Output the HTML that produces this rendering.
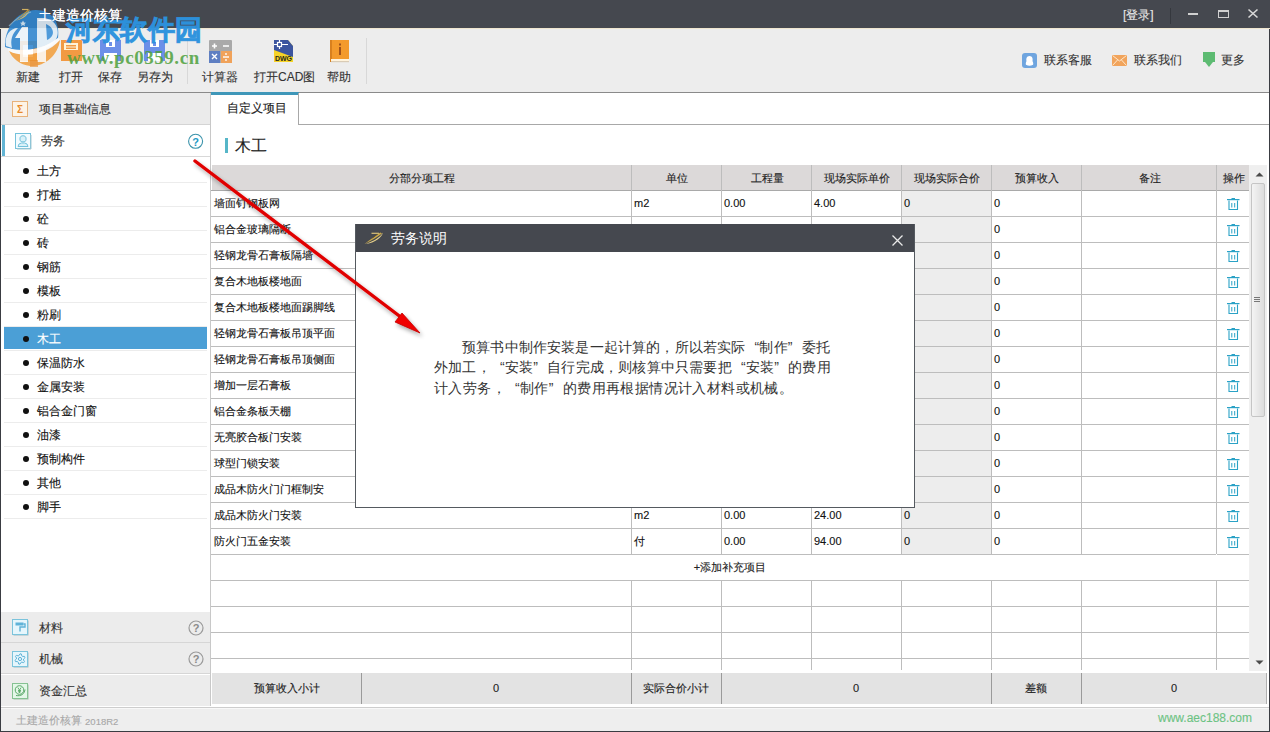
<!DOCTYPE html><html><head><meta charset="utf-8"><style>
*{margin:0;padding:0;box-sizing:border-box}
html,body{width:1270px;height:732px;overflow:hidden;background:#ededed;font-family:"Liberation Sans",sans-serif;font-size:12px;color:#222}
.a{position:absolute}
.t{position:absolute;white-space:nowrap;line-height:1}
.s{-webkit-text-stroke:0.12px currentColor}
svg{position:absolute;overflow:visible}
</style></head><body>
<div class="a" style="left:0px;top:0px;width:1270px;height:28px;background:#45484f;"></div>
<div class="a" style="left:0px;top:28px;width:1270px;height:1px;background:#efe6cf;"></div>
<div class="t" style="left:38px;top:8px;font-size:14px;color:#ffffff;">土建造价核算</div>
<div class="t s" style="left:1123px;top:9px;font-size:12px;color:#e6e6e6;">[登录]</div>
<div class="a" style="left:1170px;top:8px;width:1px;height:16px;background:#35383e;"></div>
<div class="a" style="left:1188px;top:13px;width:10px;height:2px;background:#d0d0d0;"></div>
<div class="a" style="left:1218px;top:10px;width:11px;height:8px;border:1px solid #d0d0d0;border-top:2px solid #d0d0d0"></div>
<svg style="left:1248px;top:9px" width="10" height="9" viewBox="0 0 10 9"><path d="M0.5 0.5 L9.5 8.5 M9.5 0.5 L0.5 8.5" stroke="#d8d8d8" stroke-width="1.6"/></svg>
<div class="a" style="left:0px;top:29px;width:1270px;height:63px;background:#ededed;"></div>
<div class="a" style="left:0px;top:92px;width:1270px;height:1px;background:#8a8a8a;"></div>
<div class="t s" style="left:16px;top:71px;font-size:12px;color:#333;">新建</div>
<div class="t s" style="left:59px;top:71px;font-size:12px;color:#333;">打开</div>
<div class="t s" style="left:98px;top:71px;font-size:12px;color:#333;">保存</div>
<div class="t s" style="left:137px;top:71px;font-size:12px;color:#333;">另存为</div>
<div class="t s" style="left:202px;top:71px;font-size:12px;color:#333;">计算器</div>
<div class="t s" style="left:254px;top:71px;font-size:12px;color:#333;">打开CAD图</div>
<div class="t s" style="left:327px;top:71px;font-size:12px;color:#333;">帮助</div>
<div class="a" style="left:187px;top:38px;width:1px;height:46px;background:#d8d8d8;"></div>
<div class="a" style="left:366px;top:38px;width:1px;height:46px;background:#d8d8d8;"></div>
<svg style="left:18px;top:40px" width="22" height="22"><rect x="2" y="1" width="17" height="20" fill="#f3a14a"/><rect x="5" y="5" width="10" height="12" fill="#fff"/></svg>
<svg style="left:61px;top:40px" width="21" height="21"><rect x="0" y="0" width="21" height="21" fill="#f29a43"/><rect x="3" y="3" width="14" height="7" fill="#fff3d8"/><rect x="5" y="5" width="10" height="1.5" fill="#f29a43"/><rect x="5" y="7.5" width="10" height="1.5" fill="#f29a43"/></svg>
<svg style="left:100px;top:40px" width="21" height="21"><rect x="0" y="0" width="21" height="21" fill="#6c8fe8"/><rect x="6" y="0" width="9" height="7" fill="#fff"/><rect x="9" y="2" width="3" height="4" fill="#6c8fe8"/><rect x="4" y="13" width="13" height="8" fill="#fff"/></svg>
<svg style="left:144px;top:40px" width="21" height="21"><rect x="0" y="0" width="21" height="21" fill="#6c8fe8"/><rect x="6" y="0" width="9" height="7" fill="#fff"/><rect x="9" y="2" width="3" height="4" fill="#6c8fe8"/><rect x="4" y="13" width="13" height="8" fill="#fff"/></svg>
<svg style="left:209px;top:40px" width="23" height="23"><rect x="0" y="0" width="23" height="23" rx="1" fill="#a9a9a9"/><rect x="0" y="11" width="11" height="12" fill="#5f7fc2"/><rect x="12" y="11" width="11" height="12" fill="#f0a25a"/><path d="M3 6 H8 M5.5 3.5 V8.5 M14 6 H20" stroke="#fff" stroke-width="1.6"/><path d="M3 14 L8 19 M8 14 L3 19" stroke="#fff" stroke-width="1.4"/><path d="M14 17 H20" stroke="#fff" stroke-width="1.4"/><circle cx="17" cy="14" r="0.9" fill="#fff"/><circle cx="17" cy="20" r="0.9" fill="#fff"/></svg>
<svg style="left:274px;top:40px" width="20" height="22"><path d="M0 0 H14 L19 6 V22 H0 Z" fill="#f6d327"/><path d="M0 0 H14 L19 6 V17 L0 10 Z" fill="#3c559f"/><path d="M0 4.5 H14 M5.5 0 V9" stroke="#ffffff" stroke-width="1.2"/><rect x="3.5" y="2.5" width="4" height="4" fill="#3c559f" stroke="#fff" stroke-width="1.2"/><text x="9.5" y="20.5" font-size="7" font-weight="bold" text-anchor="middle" fill="#2a2a1a" font-family="Liberation Sans">DWG</text></svg>
<svg style="left:330px;top:40px" width="20" height="23"><rect x="0" y="0" width="19" height="22" fill="#f39a2c"/><rect x="0" y="0" width="2" height="22" fill="#d8801e"/><rect x="1" y="19" width="18" height="2" fill="#fff3dc"/><rect x="1" y="21" width="18" height="1.2" fill="#d9cbb5"/><rect x="9" y="7" width="2" height="8" fill="#a0521a"/><rect x="9" y="3.5" width="2" height="2" fill="#a0521a"/></svg>
<svg style="left:1022px;top:53px" width="15" height="15"><rect x="0" y="0" width="15" height="15" rx="3" fill="#6fa5df"/><path d="M7.5 3 C4.5 3 4 6 4.5 8 C3.5 10 3.5 12 4.5 12 C6 13 9 13 10.5 12 C11.5 12 11.5 10 10.5 8 C11 6 10.5 3 7.5 3 Z" fill="#fff"/></svg>
<div class="t s" style="left:1044px;top:54px;font-size:12px;color:#333;">联系客服</div>
<svg style="left:1112px;top:55px" width="15" height="11"><rect x="0" y="0" width="15" height="11" fill="#f1a45c"/><path d="M0.5 0.5 L7.5 6 L14.5 0.5 M0.5 10.5 L5.5 5 M14.5 10.5 L9.5 5" stroke="#ffe8cc" stroke-width="1" fill="none"/></svg>
<div class="t s" style="left:1134px;top:54px;font-size:12px;color:#333;">联系我们</div>
<svg style="left:1203px;top:52px" width="12" height="16"><rect x="0" y="0" width="12" height="10" fill="#5dbb72"/><path d="M2 10 L10 10 L6 15 Z" fill="#5dbb72"/></svg>
<div class="t s" style="left:1221px;top:54px;font-size:12px;color:#333;">更多</div>
<div class="a" style="left:1px;top:93px;width:209px;height:614px;background:#ffffff;"></div>
<div class="a" style="left:1px;top:93px;width:209px;height:31px;background:#ebebeb;"></div>
<div class="a" style="left:1px;top:124px;width:209px;height:1px;background:#d4d4d4;"></div>
<svg style="left:12px;top:101px" width="17" height="17"><rect x="0.5" y="0.5" width="15" height="15" fill="#fdf3e6" stroke="#e8b27a"/><text x="8" y="12" font-size="10" font-weight="bold" text-anchor="middle" fill="#e88a2a" font-family="Liberation Sans">Σ</text></svg>
<div class="t s" style="left:39px;top:103px;font-size:12px;color:#333;">项目基础信息</div>
<div class="a" style="left:1px;top:125px;width:209px;height:31px;background:#ffffff;"></div>
<div class="a" style="left:2px;top:125px;width:3px;height:31px;background:#62b4d4;"></div>
<div class="a" style="left:1px;top:156px;width:209px;height:1px;background:#d8d8d8;"></div>
<svg style="left:15px;top:133px" width="17" height="17"><rect x="0.5" y="0.5" width="15" height="15" fill="#f2fbff" stroke="#74c2dc"/><path d="M16 2 V16 H2" stroke="#a9c9d2" stroke-width="1" fill="none"/><path d="M5 5 C5 2 11 2 11 5 V7 C11 9.5 5 9.5 5 7 Z" fill="#d9f1f9" stroke="#74c2dc"/><path d="M3 13.5 L4 11 L6.5 10 L9.5 10 L12 11 L13 13.5 Z" fill="#d9f1f9" stroke="#74c2dc"/></svg>
<div class="t s" style="left:41px;top:135px;font-size:12px;color:#333;">劳务</div>
<svg style="left:188px;top:134px" width="16" height="16"><circle cx="7.6" cy="7.3" r="7" fill="#fff" stroke="#3b93ab" stroke-width="1.1"/><text x="7.6" y="11.5" font-size="11" font-weight="bold" text-anchor="middle" fill="#1d9ac6" font-family="Liberation Sans">?</text></svg>
<div class="a" style="left:23px;top:168px;width:6px;height:6px;border-radius:50%;background:#111"></div>
<div class="t s" style="left:37px;top:165px;font-size:12px;color:#111;">土方</div>
<div class="a" style="left:4px;top:182px;width:203px;height:1px;background:#ececec;"></div>
<div class="a" style="left:23px;top:192px;width:6px;height:6px;border-radius:50%;background:#111"></div>
<div class="t s" style="left:37px;top:189px;font-size:12px;color:#111;">打桩</div>
<div class="a" style="left:4px;top:206px;width:203px;height:1px;background:#ececec;"></div>
<div class="a" style="left:23px;top:216px;width:6px;height:6px;border-radius:50%;background:#111"></div>
<div class="t s" style="left:37px;top:213px;font-size:12px;color:#111;">砼</div>
<div class="a" style="left:4px;top:230px;width:203px;height:1px;background:#ececec;"></div>
<div class="a" style="left:23px;top:240px;width:6px;height:6px;border-radius:50%;background:#111"></div>
<div class="t s" style="left:37px;top:237px;font-size:12px;color:#111;">砖</div>
<div class="a" style="left:4px;top:254px;width:203px;height:1px;background:#ececec;"></div>
<div class="a" style="left:23px;top:264px;width:6px;height:6px;border-radius:50%;background:#111"></div>
<div class="t s" style="left:37px;top:261px;font-size:12px;color:#111;">钢筋</div>
<div class="a" style="left:4px;top:278px;width:203px;height:1px;background:#ececec;"></div>
<div class="a" style="left:23px;top:288px;width:6px;height:6px;border-radius:50%;background:#111"></div>
<div class="t s" style="left:37px;top:285px;font-size:12px;color:#111;">模板</div>
<div class="a" style="left:4px;top:302px;width:203px;height:1px;background:#ececec;"></div>
<div class="a" style="left:23px;top:312px;width:6px;height:6px;border-radius:50%;background:#111"></div>
<div class="t s" style="left:37px;top:309px;font-size:12px;color:#111;">粉刷</div>
<div class="a" style="left:4px;top:326px;width:203px;height:1px;background:#ececec;"></div>
<div class="a" style="left:4px;top:327px;width:203px;height:22px;background:#4b9fd6;"></div>
<div class="a" style="left:23px;top:336px;width:6px;height:6px;border-radius:50%;background:#111"></div>
<div class="t s" style="left:37px;top:333px;font-size:12px;color:#ffffff;">木工</div>
<div class="a" style="left:4px;top:350px;width:203px;height:1px;background:#ececec;"></div>
<div class="a" style="left:23px;top:360px;width:6px;height:6px;border-radius:50%;background:#111"></div>
<div class="t s" style="left:37px;top:357px;font-size:12px;color:#111;">保温防水</div>
<div class="a" style="left:4px;top:374px;width:203px;height:1px;background:#ececec;"></div>
<div class="a" style="left:23px;top:384px;width:6px;height:6px;border-radius:50%;background:#111"></div>
<div class="t s" style="left:37px;top:381px;font-size:12px;color:#111;">金属安装</div>
<div class="a" style="left:4px;top:398px;width:203px;height:1px;background:#ececec;"></div>
<div class="a" style="left:23px;top:408px;width:6px;height:6px;border-radius:50%;background:#111"></div>
<div class="t s" style="left:37px;top:405px;font-size:12px;color:#111;">铝合金门窗</div>
<div class="a" style="left:4px;top:422px;width:203px;height:1px;background:#ececec;"></div>
<div class="a" style="left:23px;top:432px;width:6px;height:6px;border-radius:50%;background:#111"></div>
<div class="t s" style="left:37px;top:429px;font-size:12px;color:#111;">油漆</div>
<div class="a" style="left:4px;top:446px;width:203px;height:1px;background:#ececec;"></div>
<div class="a" style="left:23px;top:456px;width:6px;height:6px;border-radius:50%;background:#111"></div>
<div class="t s" style="left:37px;top:453px;font-size:12px;color:#111;">预制构件</div>
<div class="a" style="left:4px;top:470px;width:203px;height:1px;background:#ececec;"></div>
<div class="a" style="left:23px;top:480px;width:6px;height:6px;border-radius:50%;background:#111"></div>
<div class="t s" style="left:37px;top:477px;font-size:12px;color:#111;">其他</div>
<div class="a" style="left:4px;top:494px;width:203px;height:1px;background:#ececec;"></div>
<div class="a" style="left:23px;top:504px;width:6px;height:6px;border-radius:50%;background:#111"></div>
<div class="t s" style="left:37px;top:501px;font-size:12px;color:#111;">脚手</div>
<div class="a" style="left:4px;top:518px;width:203px;height:1px;background:#ececec;"></div>
<div class="a" style="left:1px;top:612px;width:209px;height:31px;background:#ececec;"></div>
<div class="a" style="left:1px;top:642px;width:209px;height:1px;background:#d6d6d6;"></div>
<div class="t s" style="left:39px;top:622px;font-size:12px;color:#333;">材料</div>
<svg style="left:188px;top:620px" width="16" height="16"><circle cx="8" cy="8" r="7" fill="none" stroke="#9a9a9a" stroke-width="1.2"/><text x="8" y="12" font-size="11" font-weight="bold" text-anchor="middle" fill="#8a8a8a" font-family="Liberation Sans">?</text></svg>
<svg style="left:12px;top:619px" width="18" height="18"><rect x="1.5" y="1.5" width="15" height="15" fill="#9fbcc4"/><rect x="0.5" y="0.5" width="15" height="15" fill="#e6f6fc" stroke="#7cc4dc"/><path d="M3.5 3.5 H11.5 V6.5 H3.5 Z" fill="#5fb3d8"/><path d="M11.5 5 H13 V8 H8 V12.5" stroke="#5fb3d8" stroke-width="1.4" fill="none"/></svg>
<div class="a" style="left:1px;top:643px;width:209px;height:31px;background:#ececec;"></div>
<div class="a" style="left:1px;top:673px;width:209px;height:1px;background:#d6d6d6;"></div>
<div class="t s" style="left:39px;top:653px;font-size:12px;color:#333;">机械</div>
<svg style="left:188px;top:651px" width="16" height="16"><circle cx="8" cy="8" r="7" fill="none" stroke="#9a9a9a" stroke-width="1.2"/><text x="8" y="12" font-size="11" font-weight="bold" text-anchor="middle" fill="#8a8a8a" font-family="Liberation Sans">?</text></svg>
<svg style="left:12px;top:651px" width="18" height="18"><rect x="1.5" y="1.5" width="15" height="15" fill="#9fbcc4"/><rect x="0.5" y="0.5" width="15" height="15" fill="#e6f6fc" stroke="#7cc4dc"/><path d="M8.00 2.80 L9.35 2.98 L9.80 4.88 L10.55 5.45 L12.50 5.40 L13.02 6.65 L11.60 8.00 L11.48 8.93 L12.50 10.60 L11.68 11.68 L9.80 11.12 L8.93 11.48 L8.00 13.20 L6.65 13.02 L6.20 11.12 L5.45 10.55 L3.50 10.60 L2.98 9.35 L4.40 8.00 L4.52 7.07 L3.50 5.40 L4.32 4.32 L6.20 4.88 L7.07 4.52 Z" fill="none" stroke="#5fb3d8" stroke-width="1" stroke-linejoin="round"/><circle cx="8" cy="8" r="1.6" fill="none" stroke="#5fb3d8" stroke-width="1"/></svg>
<div class="a" style="left:1px;top:675px;width:209px;height:32px;background:#ececec;"></div>
<div class="t s" style="left:39px;top:685px;font-size:12px;color:#333;">资金汇总</div>
<svg style="left:12px;top:683px" width="18" height="18"><rect x="1.5" y="1.5" width="15" height="15" fill="#9fbfa6"/><rect x="0.5" y="0.5" width="15" height="15" fill="#e4f7e8" stroke="#86c292"/><circle cx="7.5" cy="7" r="4.3" fill="none" stroke="#5aa868" stroke-width="1"/><path d="M4 12.5 C9 13.5 12.5 11 13 6.5" fill="none" stroke="#5aa868" stroke-width="1"/><path d="M5.8 4.5 L7.5 7 L9.2 4.5 M7.5 7 V10 M6 7.5 H9 M6 8.8 H9" stroke="#5aa868" stroke-width="0.9" fill="none"/></svg>
<div class="a" style="left:210px;top:93px;width:1px;height:614px;background:#c8c8c8;"></div>
<div class="a" style="left:211px;top:93px;width:1058px;height:614px;background:#ffffff;"></div>
<div class="a" style="left:211px;top:92px;width:88px;height:3px;background:#3f97b9;"></div>
<div class="a" style="left:299px;top:95px;width:970px;height:0px;background:#fff;"></div>
<div class="a" style="left:298px;top:93px;width:1px;height:32px;background:#a8a8a8;"></div>
<div class="a" style="left:299px;top:124px;width:970px;height:1px;background:#a8a8a8;"></div>
<div class="t s" style="left:227px;top:102px;font-size:12px;color:#222;">自定义项目</div>
<div class="a" style="left:225px;top:138px;width:3px;height:15px;background:#56b6c8;"></div>
<div class="t" style="left:235px;top:138px;font-size:16px;color:#222;-webkit-text-stroke:0.15px #222">木工</div>
<div class="a" style="left:212px;top:165px;width:1037px;height:25px;background:#dcd9d9;"></div>
<div class="t s" style="left:222.0px;width:400px;text-align:center;top:173px;font-size:11px;color:#222;">分部分项工程</div>
<div class="t s" style="left:477.0px;width:400px;text-align:center;top:173px;font-size:11px;color:#222;">单位</div>
<div class="t s" style="left:567.0px;width:400px;text-align:center;top:173px;font-size:11px;color:#222;">工程量</div>
<div class="t s" style="left:657.0px;width:400px;text-align:center;top:173px;font-size:11px;color:#222;">现场实际单价</div>
<div class="t s" style="left:747.0px;width:400px;text-align:center;top:173px;font-size:11px;color:#222;">现场实际合价</div>
<div class="t s" style="left:837.0px;width:400px;text-align:center;top:173px;font-size:11px;color:#222;">预算收入</div>
<div class="t s" style="left:949.5px;width:400px;text-align:center;top:173px;font-size:11px;color:#222;">备注</div>
<div class="t s" style="left:1033.5px;width:400px;text-align:center;top:173px;font-size:11px;color:#222;">操作</div>
<div class="a" style="left:902px;top:191px;width:89px;height:364px;background:#ededed;"></div>
<div class="t s" style="left:214px;top:198px;font-size:11px;color:#111;">墙面钉钢板网</div>
<div class="t s" style="left:634px;top:198px;font-size:11px;color:#111;">m2</div>
<div class="t s" style="left:724px;top:198px;font-size:11px;color:#111;">0.00</div>
<div class="t s" style="left:814px;top:198px;font-size:11px;color:#111;">4.00</div>
<div class="t s" style="left:904px;top:198px;font-size:11px;color:#111;">0</div>
<div class="t s" style="left:994px;top:198px;font-size:11px;color:#111;">0</div>
<svg style="left:1227px;top:198px" width="13" height="13"><rect x="0" y="1" width="12.5" height="1.2" fill="#2aa2c6"/><rect x="4.5" y="0" width="3.5" height="1.2" fill="#2aa2c6"/><path d="M2 2.5 V11.5 H10.5 V2.5" stroke="#2aa2c6" stroke-width="1.1" fill="none"/><path d="M4.8 5 V9.5 M7.7 5 V9.5" stroke="#2aa2c6" stroke-width="1"/></svg>
<div class="t s" style="left:214px;top:224px;font-size:11px;color:#111;">铝合金玻璃隔断</div>
<div class="t s" style="left:994px;top:224px;font-size:11px;color:#111;">0</div>
<svg style="left:1227px;top:224px" width="13" height="13"><rect x="0" y="1" width="12.5" height="1.2" fill="#2aa2c6"/><rect x="4.5" y="0" width="3.5" height="1.2" fill="#2aa2c6"/><path d="M2 2.5 V11.5 H10.5 V2.5" stroke="#2aa2c6" stroke-width="1.1" fill="none"/><path d="M4.8 5 V9.5 M7.7 5 V9.5" stroke="#2aa2c6" stroke-width="1"/></svg>
<div class="t s" style="left:214px;top:250px;font-size:11px;color:#111;">轻钢龙骨石膏板隔墙</div>
<div class="t s" style="left:994px;top:250px;font-size:11px;color:#111;">0</div>
<svg style="left:1227px;top:250px" width="13" height="13"><rect x="0" y="1" width="12.5" height="1.2" fill="#2aa2c6"/><rect x="4.5" y="0" width="3.5" height="1.2" fill="#2aa2c6"/><path d="M2 2.5 V11.5 H10.5 V2.5" stroke="#2aa2c6" stroke-width="1.1" fill="none"/><path d="M4.8 5 V9.5 M7.7 5 V9.5" stroke="#2aa2c6" stroke-width="1"/></svg>
<div class="t s" style="left:214px;top:276px;font-size:11px;color:#111;">复合木地板楼地面</div>
<div class="t s" style="left:994px;top:276px;font-size:11px;color:#111;">0</div>
<svg style="left:1227px;top:276px" width="13" height="13"><rect x="0" y="1" width="12.5" height="1.2" fill="#2aa2c6"/><rect x="4.5" y="0" width="3.5" height="1.2" fill="#2aa2c6"/><path d="M2 2.5 V11.5 H10.5 V2.5" stroke="#2aa2c6" stroke-width="1.1" fill="none"/><path d="M4.8 5 V9.5 M7.7 5 V9.5" stroke="#2aa2c6" stroke-width="1"/></svg>
<div class="t s" style="left:214px;top:302px;font-size:11px;color:#111;">复合木地板楼地面踢脚线</div>
<div class="t s" style="left:994px;top:302px;font-size:11px;color:#111;">0</div>
<svg style="left:1227px;top:302px" width="13" height="13"><rect x="0" y="1" width="12.5" height="1.2" fill="#2aa2c6"/><rect x="4.5" y="0" width="3.5" height="1.2" fill="#2aa2c6"/><path d="M2 2.5 V11.5 H10.5 V2.5" stroke="#2aa2c6" stroke-width="1.1" fill="none"/><path d="M4.8 5 V9.5 M7.7 5 V9.5" stroke="#2aa2c6" stroke-width="1"/></svg>
<div class="t s" style="left:214px;top:328px;font-size:11px;color:#111;">轻钢龙骨石膏板吊顶平面</div>
<div class="t s" style="left:994px;top:328px;font-size:11px;color:#111;">0</div>
<svg style="left:1227px;top:328px" width="13" height="13"><rect x="0" y="1" width="12.5" height="1.2" fill="#2aa2c6"/><rect x="4.5" y="0" width="3.5" height="1.2" fill="#2aa2c6"/><path d="M2 2.5 V11.5 H10.5 V2.5" stroke="#2aa2c6" stroke-width="1.1" fill="none"/><path d="M4.8 5 V9.5 M7.7 5 V9.5" stroke="#2aa2c6" stroke-width="1"/></svg>
<div class="t s" style="left:214px;top:354px;font-size:11px;color:#111;">轻钢龙骨石膏板吊顶侧面</div>
<div class="t s" style="left:994px;top:354px;font-size:11px;color:#111;">0</div>
<svg style="left:1227px;top:354px" width="13" height="13"><rect x="0" y="1" width="12.5" height="1.2" fill="#2aa2c6"/><rect x="4.5" y="0" width="3.5" height="1.2" fill="#2aa2c6"/><path d="M2 2.5 V11.5 H10.5 V2.5" stroke="#2aa2c6" stroke-width="1.1" fill="none"/><path d="M4.8 5 V9.5 M7.7 5 V9.5" stroke="#2aa2c6" stroke-width="1"/></svg>
<div class="t s" style="left:214px;top:380px;font-size:11px;color:#111;">增加一层石膏板</div>
<div class="t s" style="left:994px;top:380px;font-size:11px;color:#111;">0</div>
<svg style="left:1227px;top:380px" width="13" height="13"><rect x="0" y="1" width="12.5" height="1.2" fill="#2aa2c6"/><rect x="4.5" y="0" width="3.5" height="1.2" fill="#2aa2c6"/><path d="M2 2.5 V11.5 H10.5 V2.5" stroke="#2aa2c6" stroke-width="1.1" fill="none"/><path d="M4.8 5 V9.5 M7.7 5 V9.5" stroke="#2aa2c6" stroke-width="1"/></svg>
<div class="t s" style="left:214px;top:406px;font-size:11px;color:#111;">铝合金条板天棚</div>
<div class="t s" style="left:994px;top:406px;font-size:11px;color:#111;">0</div>
<svg style="left:1227px;top:406px" width="13" height="13"><rect x="0" y="1" width="12.5" height="1.2" fill="#2aa2c6"/><rect x="4.5" y="0" width="3.5" height="1.2" fill="#2aa2c6"/><path d="M2 2.5 V11.5 H10.5 V2.5" stroke="#2aa2c6" stroke-width="1.1" fill="none"/><path d="M4.8 5 V9.5 M7.7 5 V9.5" stroke="#2aa2c6" stroke-width="1"/></svg>
<div class="t s" style="left:214px;top:432px;font-size:11px;color:#111;">无亮胶合板门安装</div>
<div class="t s" style="left:994px;top:432px;font-size:11px;color:#111;">0</div>
<svg style="left:1227px;top:432px" width="13" height="13"><rect x="0" y="1" width="12.5" height="1.2" fill="#2aa2c6"/><rect x="4.5" y="0" width="3.5" height="1.2" fill="#2aa2c6"/><path d="M2 2.5 V11.5 H10.5 V2.5" stroke="#2aa2c6" stroke-width="1.1" fill="none"/><path d="M4.8 5 V9.5 M7.7 5 V9.5" stroke="#2aa2c6" stroke-width="1"/></svg>
<div class="t s" style="left:214px;top:458px;font-size:11px;color:#111;">球型门锁安装</div>
<div class="t s" style="left:994px;top:458px;font-size:11px;color:#111;">0</div>
<svg style="left:1227px;top:458px" width="13" height="13"><rect x="0" y="1" width="12.5" height="1.2" fill="#2aa2c6"/><rect x="4.5" y="0" width="3.5" height="1.2" fill="#2aa2c6"/><path d="M2 2.5 V11.5 H10.5 V2.5" stroke="#2aa2c6" stroke-width="1.1" fill="none"/><path d="M4.8 5 V9.5 M7.7 5 V9.5" stroke="#2aa2c6" stroke-width="1"/></svg>
<div class="t s" style="left:214px;top:484px;font-size:11px;color:#111;">成品木防火门门框制安</div>
<div class="t s" style="left:994px;top:484px;font-size:11px;color:#111;">0</div>
<svg style="left:1227px;top:484px" width="13" height="13"><rect x="0" y="1" width="12.5" height="1.2" fill="#2aa2c6"/><rect x="4.5" y="0" width="3.5" height="1.2" fill="#2aa2c6"/><path d="M2 2.5 V11.5 H10.5 V2.5" stroke="#2aa2c6" stroke-width="1.1" fill="none"/><path d="M4.8 5 V9.5 M7.7 5 V9.5" stroke="#2aa2c6" stroke-width="1"/></svg>
<div class="t s" style="left:214px;top:510px;font-size:11px;color:#111;">成品木防火门安装</div>
<div class="t s" style="left:634px;top:510px;font-size:11px;color:#111;">m2</div>
<div class="t s" style="left:724px;top:510px;font-size:11px;color:#111;">0.00</div>
<div class="t s" style="left:814px;top:510px;font-size:11px;color:#111;">24.00</div>
<div class="t s" style="left:904px;top:510px;font-size:11px;color:#111;">0</div>
<div class="t s" style="left:994px;top:510px;font-size:11px;color:#111;">0</div>
<svg style="left:1227px;top:510px" width="13" height="13"><rect x="0" y="1" width="12.5" height="1.2" fill="#2aa2c6"/><rect x="4.5" y="0" width="3.5" height="1.2" fill="#2aa2c6"/><path d="M2 2.5 V11.5 H10.5 V2.5" stroke="#2aa2c6" stroke-width="1.1" fill="none"/><path d="M4.8 5 V9.5 M7.7 5 V9.5" stroke="#2aa2c6" stroke-width="1"/></svg>
<div class="t s" style="left:214px;top:536px;font-size:11px;color:#111;">防火门五金安装</div>
<div class="t s" style="left:634px;top:536px;font-size:11px;color:#111;">付</div>
<div class="t s" style="left:724px;top:536px;font-size:11px;color:#111;">0.00</div>
<div class="t s" style="left:814px;top:536px;font-size:11px;color:#111;">94.00</div>
<div class="t s" style="left:904px;top:536px;font-size:11px;color:#111;">0</div>
<div class="t s" style="left:994px;top:536px;font-size:11px;color:#111;">0</div>
<svg style="left:1227px;top:536px" width="13" height="13"><rect x="0" y="1" width="12.5" height="1.2" fill="#2aa2c6"/><rect x="4.5" y="0" width="3.5" height="1.2" fill="#2aa2c6"/><path d="M2 2.5 V11.5 H10.5 V2.5" stroke="#2aa2c6" stroke-width="1.1" fill="none"/><path d="M4.8 5 V9.5 M7.7 5 V9.5" stroke="#2aa2c6" stroke-width="1"/></svg>
<div class="t s" style="left:530px;width:400px;text-align:center;top:562px;font-size:11px;color:#222;">+添加补充项目</div>
<div class="a" style="left:211px;top:190px;width:1038px;height:1px;background:#a9a9a9;"></div>
<div class="a" style="left:211px;top:216px;width:1038px;height:1px;background:#bdbdbd;"></div>
<div class="a" style="left:211px;top:242px;width:1038px;height:1px;background:#bdbdbd;"></div>
<div class="a" style="left:211px;top:268px;width:1038px;height:1px;background:#bdbdbd;"></div>
<div class="a" style="left:211px;top:294px;width:1038px;height:1px;background:#bdbdbd;"></div>
<div class="a" style="left:211px;top:320px;width:1038px;height:1px;background:#bdbdbd;"></div>
<div class="a" style="left:211px;top:346px;width:1038px;height:1px;background:#bdbdbd;"></div>
<div class="a" style="left:211px;top:372px;width:1038px;height:1px;background:#bdbdbd;"></div>
<div class="a" style="left:211px;top:398px;width:1038px;height:1px;background:#bdbdbd;"></div>
<div class="a" style="left:211px;top:424px;width:1038px;height:1px;background:#bdbdbd;"></div>
<div class="a" style="left:211px;top:450px;width:1038px;height:1px;background:#bdbdbd;"></div>
<div class="a" style="left:211px;top:476px;width:1038px;height:1px;background:#bdbdbd;"></div>
<div class="a" style="left:211px;top:502px;width:1038px;height:1px;background:#bdbdbd;"></div>
<div class="a" style="left:211px;top:528px;width:1038px;height:1px;background:#bdbdbd;"></div>
<div class="a" style="left:211px;top:554px;width:1038px;height:1px;background:#bdbdbd;"></div>
<div class="a" style="left:211px;top:580px;width:1038px;height:1px;background:#bdbdbd;"></div>
<div class="a" style="left:211px;top:606px;width:1038px;height:1px;background:#bdbdbd;"></div>
<div class="a" style="left:211px;top:632px;width:1038px;height:1px;background:#bdbdbd;"></div>
<div class="a" style="left:211px;top:658px;width:1038px;height:1px;background:#bdbdbd;"></div>
<div class="a" style="left:631px;top:165px;width:1px;height:390px;background:#bdbdbd;"></div>
<div class="a" style="left:631px;top:580px;width:1px;height:90px;background:#bdbdbd;"></div>
<div class="a" style="left:721px;top:165px;width:1px;height:390px;background:#bdbdbd;"></div>
<div class="a" style="left:721px;top:580px;width:1px;height:90px;background:#bdbdbd;"></div>
<div class="a" style="left:811px;top:165px;width:1px;height:390px;background:#bdbdbd;"></div>
<div class="a" style="left:811px;top:580px;width:1px;height:90px;background:#bdbdbd;"></div>
<div class="a" style="left:901px;top:165px;width:1px;height:390px;background:#bdbdbd;"></div>
<div class="a" style="left:901px;top:580px;width:1px;height:90px;background:#bdbdbd;"></div>
<div class="a" style="left:991px;top:165px;width:1px;height:390px;background:#bdbdbd;"></div>
<div class="a" style="left:991px;top:580px;width:1px;height:90px;background:#bdbdbd;"></div>
<div class="a" style="left:1081px;top:165px;width:1px;height:390px;background:#bdbdbd;"></div>
<div class="a" style="left:1081px;top:580px;width:1px;height:90px;background:#bdbdbd;"></div>
<div class="a" style="left:1216px;top:165px;width:1px;height:390px;background:#bdbdbd;"></div>
<div class="a" style="left:1216px;top:580px;width:1px;height:90px;background:#bdbdbd;"></div>
<div class="a" style="left:1249px;top:165px;width:1px;height:390px;background:#bdbdbd;"></div>
<div class="a" style="left:1249px;top:580px;width:1px;height:90px;background:#bdbdbd;"></div>
<div class="a" style="left:1216px;top:554px;width:1px;height:26px;background:#fff;"></div>
<div class="a" style="left:1249px;top:165px;width:18px;height:506px;background:#f0f0f0;"></div>
<div class="a" style="left:1250px;top:166px;width:17px;height:504px;background:#efefef;"></div>
<div class="a" style="left:1251px;top:183px;width:14px;height:234px;background:linear-gradient(90deg,#f4f4f4,#dcdcdc);border:1px solid #c5c5c5;border-radius:2px"></div>
<svg style="left:1255px;top:172px" width="9" height="5"><path d="M0.5 4.5 L4.5 0.5 L8.5 4.5 Z" fill="#4a4a4a"/></svg>
<svg style="left:1255px;top:660px" width="9" height="5"><path d="M0.5 0.5 L4.5 4.5 L8.5 0.5 Z" fill="#4a4a4a"/></svg>
<div class="a" style="left:1254px;top:297px;width:6px;height:1px;background:#777;"></div>
<div class="a" style="left:1254px;top:299px;width:6px;height:1px;background:#777;"></div>
<div class="a" style="left:1254px;top:301px;width:6px;height:1px;background:#777;"></div>
<div class="a" style="left:211px;top:671px;width:1058px;height:36px;background:#ffffff;"></div>
<div class="a" style="left:212px;top:673px;width:1055px;height:31px;background:#e3e3e3;"></div>
<div class="a" style="left:361px;top:673px;width:1px;height:31px;background:#9a9a9a;"></div>
<div class="a" style="left:631px;top:673px;width:1px;height:31px;background:#9a9a9a;"></div>
<div class="a" style="left:721px;top:673px;width:1px;height:31px;background:#9a9a9a;"></div>
<div class="a" style="left:991px;top:673px;width:1px;height:31px;background:#9a9a9a;"></div>
<div class="a" style="left:1081px;top:673px;width:1px;height:31px;background:#9a9a9a;"></div>
<div class="t s" style="left:86.5px;width:400px;text-align:center;top:683px;font-size:11px;color:#222;">预算收入小计</div>
<div class="t s" style="left:296.0px;width:400px;text-align:center;top:683px;font-size:11px;color:#222;">0</div>
<div class="t s" style="left:476.0px;width:400px;text-align:center;top:683px;font-size:11px;color:#222;">实际合价小计</div>
<div class="t s" style="left:656.0px;width:400px;text-align:center;top:683px;font-size:11px;color:#222;">0</div>
<div class="t s" style="left:836.0px;width:400px;text-align:center;top:683px;font-size:11px;color:#222;">差额</div>
<div class="t s" style="left:974.0px;width:400px;text-align:center;top:683px;font-size:11px;color:#222;">0</div>
<div class="a" style="left:1266px;top:673px;width:1px;height:31px;background:#b0b0b0;"></div>
<div class="a" style="left:1px;top:706px;width:1268px;height:1px;background:#ffffff;"></div>
<div class="a" style="left:1px;top:707px;width:1268px;height:1px;background:#cdcdcd;"></div>
<div class="a" style="left:1px;top:708px;width:1268px;height:1px;background:#f8f8f8;"></div>
<div class="a" style="left:1px;top:709px;width:1268px;height:22px;background:#eeeeee;"></div>
<div class="t s" style="left:16px;top:715px;font-size:11px;color:#a8a8a8;">土建造价核算 <span style="font-size:9.5px;position:relative;top:1px">2018R2</span></div>
<div class="t s" style="left:1158px;top:712px;font-size:12px;color:#6cc383;">www.aec188.com</div>
<div class="a" style="left:0px;top:29px;width:1px;height:703px;background:#3a3c42;"></div>
<div class="a" style="left:1269px;top:29px;width:1px;height:703px;background:#3a3c42;"></div>
<div class="a" style="left:0px;top:731px;width:1270px;height:1px;background:#3a3c42;"></div>
<div class="a" style="left:355px;top:224px;width:560px;height:284px;background:#555a60;"></div>
<div class="a" style="left:356px;top:224px;width:558px;height:28px;background:#45484f;"></div>
<div class="a" style="left:356px;top:252px;width:558px;height:255px;background:#ffffff;"></div>
<svg style="left:358px;top:226px" width="30" height="24"><path d="M6.5 18 C12 17 22 12 25 6.5 C24 11 18 17 6.5 18 Z" fill="#e6d08a"/><path d="M6.5 18 C12 14 18 9 22.5 6.5 L24 7.5 C19 11 13 15 6.5 18 Z" fill="#c9a84a"/><path d="M14.5 12 L21 7" stroke="#5a4a2a" stroke-width="0.8"/><path d="M13.5 7.3 H21" stroke="#d8c07a" stroke-width="1.2"/></svg>
<div class="t" style="left:391px;top:231px;font-size:14px;color:#ffffff;">劳务说明</div>
<svg style="left:892px;top:235px" width="11" height="11"><path d="M0.5 0.5 L10.5 10.5 M10.5 0.5 L0.5 10.5" stroke="#eaeaea" stroke-width="1.3"/></svg>
<div class="t" id="dl1" style="left:462px;top:340px;font-size:14px;color:#333;letter-spacing:0.17px">预算书中制作安装是一起计算的，所以若实际<span style="display:inline-block;width:14px;text-align:right">“</span>制作<span style="display:inline-block;width:14px;text-align:left">”</span>委托</div>
<div class="t" id="dl2" style="left:434px;top:360px;font-size:14px;color:#333;letter-spacing:0.2px">外加工，<span style="display:inline-block;width:14px;text-align:right">“</span>安装<span style="display:inline-block;width:14px;text-align:left">”</span>自行完成，则核算中只需要把<span style="display:inline-block;width:14px;text-align:right">“</span>安装<span style="display:inline-block;width:14px;text-align:left">”</span>的费用</div>
<div class="t" id="dl3" style="left:434px;top:381px;font-size:14px;color:#333;letter-spacing:0.4px">计入劳务，<span style="display:inline-block;width:14px;text-align:right">“</span>制作<span style="display:inline-block;width:14px;text-align:left">”</span>的费用再根据情况计入材料或机械。</div>
<svg style="left:0;top:0" width="1270" height="732"><defs><filter id="sh" x="-20%" y="-20%" width="140%" height="140%"><feGaussianBlur in="SourceAlpha" stdDeviation="2"/><feOffset dx="2" dy="3"/><feComponentTransfer><feFuncA type="linear" slope="0.35"/></feComponentTransfer><feMerge><feMergeNode/><feMergeNode in="SourceGraphic"/></feMerge></filter></defs><g filter="url(#sh)"><path d="M195 161 L402 318" stroke="#e00000" stroke-width="3.4" stroke-linecap="round"/><path d="M420 333 L402 313 L395 322 Z" fill="#f00000" stroke="#c00000" stroke-width="0.8" stroke-linejoin="round"/></g></svg>
<svg style="left:0;top:0" width="220" height="80"><g opacity="0.88"><path d="M5 47 C4 30 16 10 36 10 C52 10 60 22 58 38 L52 42 C40 50 20 52 8 48 Z" fill="#2f86d0"/><path d="M9 26 Q18 16 31 12" stroke="#9fd0f0" stroke-width="1.2" fill="none" opacity="0.7"/><path d="M6 46 C4 36 10 28 18 28 C12 34 10 40 12 48 Z" fill="#ffffff" opacity="0.85"/><path d="M8 48 C22 53 44 50 58 38 L60 40 C46 54 22 58 9 52 Z" fill="#ffffff" opacity="0.8"/><path d="M9 51 C22 58 46 56 60 40 C58 56 44 67 30 66 C20 65 12 58 9 51 Z" fill="#f2a040"/><path d="M15 38 L22 27 L28 27 L28 62 L20 62 L20 38 Z" fill="#ffffff" opacity="0.92"/><path d="M37 18 L44 18 C60 20 62 38 50 46 L46 48 L46 62 L37 62 Z" fill="#ffffff" opacity="0.85"/><path d="M46 24 C54 27 56 36 47 40 Z" fill="#3a90d8"/><path d="M30 60 H38 V67 H30 Z" fill="#e8892a" opacity="0.7"/><path d="M23 20.5 L24 22.5 L26 22.7 L24.5 24 L25 26 L23 25 L21 26 L21.5 24 L20 22.7 L22 22.5 Z" fill="#d8ecfa"/></g></svg>
<div class="t" style="left:66px;top:17px;font-size:27px;color:rgba(44,146,222,0.85);font-family:'Liberation Serif',serif;font-weight:900;-webkit-text-stroke:1px rgba(44,146,222,0.85);letter-spacing:0.2px">河东软件园</div>
<div class="t" style="left:67px;top:48px;font-size:19px;color:rgba(76,160,60,0.85);font-family:'Liberation Serif',serif;font-weight:bold;letter-spacing:0.55px">www.pc0359.cn</div>
<div class="t" style="left:38px;top:8px;font-size:14px;color:#ffffff;">土建造价核算</div>
<svg style="left:12px;top:6px" width="22" height="18"><path d="M3 15 C8 13 15 9 18 3 C17 8 12 13 3 15 Z" fill="#d9b968"/><path d="M3 15 C8 11 12 7 16 3.5 L17 4.5 C13 8 8 12 3 15 Z" fill="#b8903a"/><path d="M10 3.5 H16.5" stroke="#d0b060" stroke-width="1.2"/></svg>
</body></html>
